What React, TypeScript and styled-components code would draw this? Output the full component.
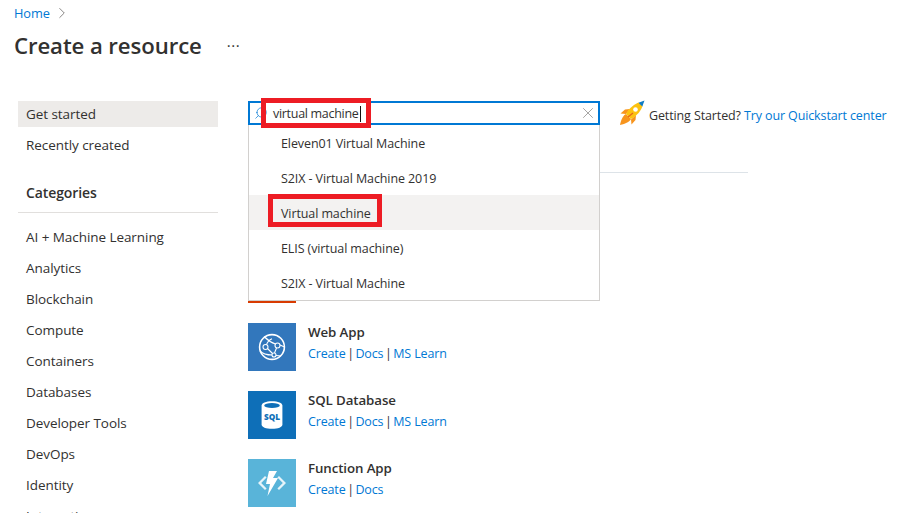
import styled, { createGlobalStyle } from "styled-components"
import { ChevronRight, Search, X } from "lucide-react"

const GlobalStyle = createGlobalStyle`
  html, body {
    margin: 0;
    height: 513px;
    overflow: hidden;
    background: #fff;
  }
  body {
    font-family: "Open Sans", "Noto Sans", Arial, sans-serif;
    font-size: 12.5px;
    letter-spacing: -0.1px;
    color: #323130;
  }
`

const Page = styled.div`
  height: 513px;
  overflow: hidden;
  box-sizing: border-box;
`

const Header = styled.header`
  padding: 4px 0 0 14px;
  height: 101px;
  box-sizing: border-box;
`

const Breadcrumb = styled.nav`
  display: flex;
  align-items: center;
  gap: 3px;
  height: 17px;
  font-size: 12.8px;
  color: #0078d4;
`

const TitleRow = styled.div`
  display: flex;
  align-items: center;
  gap: 25px;
  margin-top: 7px;
  height: 34px;
`

const Title = styled.h1`
  margin: 0;
  font-size: 22.2px;
  font-weight: 600;
  letter-spacing: -0.1px;
  color: #323130;
`

const MoreButton = styled.span`
  font-size: 15px;
  letter-spacing: 0.6px;
  line-height: 1;
`

const Body = styled.div`
  display: flex;
  padding-left: 18px;
`

const Sidebar = styled.aside`
  width: 200px;
  flex: none;
  margin-right: 30px;
`

const NavItem = styled.div<{ $active?: boolean }>`
  height: 26px;
  margin-bottom: 5px;
  padding-left: 8px;
  display: flex;
  align-items: center;
  font-size: 13.5px;
  letter-spacing: -0.06px;
  background: ${(p) => (p.$active ? "#edebe9" : "transparent")};
`

const CategoriesTitle = styled.div`
  margin: 19px 0 11px;
  height: 36px;
  box-sizing: border-box;
  padding: 0 0 4px 8px;
  font-weight: 600;
  font-size: 14px;
  display: flex;
  align-items: center;
  border-bottom: 1px solid #e1dfdd;
`

const Main = styled.main`
  flex: 1;
  min-width: 0;
`

const TopRow = styled.div`
  display: flex;
  align-items: center;
  height: 28px;
  margin-top: -2px;
`

const SearchWrap = styled.div`
  position: relative;
  width: 352px;
  flex: none;
  margin-right: 19px;
`

const SearchBox = styled.div`
  height: 24px;
  box-sizing: border-box;
  border: 2px solid #0078d4;
  display: flex;
  align-items: center;
  padding: 0 1px 0 4px;
  color: #8a8886;
`

const SearchText = styled.span`
  flex: 1;
  margin-left: 5px;
  letter-spacing: -0.3px;
  color: #323130;
`

const Caret = styled.span`
  display: inline-block;
  width: 1px;
  height: 16px;
  margin-left: 1px;
  background: #111;
  vertical-align: -4px;
`

const Dropdown = styled.div`
  position: absolute;
  z-index: 2;
  top: 24px;
  left: 0;
  right: 0;
  box-sizing: border-box;
  height: 176px;
  background: #fff;
  border: 1px solid #d2d0ce;
  border-top: none;
`

const Option = styled.div<{ $active?: boolean }>`
  height: 35px;
  box-sizing: border-box;
  display: flex;
  align-items: center;
  padding: 2px 0 0 32px;
  background: ${(p) => (p.$active ? "#f3f2f1" : "transparent")};
`

const Highlight = styled.div`
  position: absolute;
  z-index: 3;
  box-sizing: border-box;
  border: 5px solid #ed1c24;
  pointer-events: none;
`

const InputHighlight = styled(Highlight)`
  left: 13px;
  top: -3px;
  width: 110px;
  height: 30px;
`

const OptionHighlight = styled(Highlight)`
  left: 20px;
  top: 93px;
  width: 114px;
  height: 33px;
`

const Quickstart = styled.div`
  display: flex;
  align-items: center;
  gap: 4px;
  white-space: nowrap;
  letter-spacing: -0.12px;
`

const QuickstartText = styled.span`
  margin-top: 4px;
`

const Link = styled.a`
  color: #0078d4;
  text-decoration: none;
`

const Divider = styled.div`
  width: 500px;
  height: 1px;
  margin-top: 45px;
  background: #dde3e8;
`

const ResourceList = styled.div`
  margin-top: 82px;
  display: flex;
  flex-direction: column;
  gap: 20px;
`

const ResourceRow = styled.div`
  display: flex;
  gap: 12px;
  height: 48px;
`

const IconTile = styled.div<{ $bg: string }>`
  width: 48px;
  height: 48px;
  flex: none;
  background: ${(p) => p.$bg};
  display: flex;
  align-items: center;
  justify-content: center;
`

const ResourceName = styled.div`
  font-weight: 600;
  font-size: 13.3px;
  line-height: 18px;
`

const ResourceLinks = styled.div`
  margin-top: 4px;
  line-height: 18px;
  letter-spacing: -0.15px;
`

const Separator = styled.span`
  margin: 0 1.6px;
`

const WebAppIcon = () => (
  <svg width="30" height="30" viewBox="0 0 30 30" fill="none" stroke="#fff" strokeWidth="1.1">
    <circle cx="15" cy="15" r="12.4" strokeWidth="1.6" />
    <circle cx="8.500" cy="15" r="2.500" />
    <circle cx="20.500" cy="13.500" r="2.500" />
    <circle cx="17" cy="23" r="2" />
    <path d="M7 4.500c3 3 7 6 11.500 7.500M3 19c3 3 7 4 12 4M9.500 12.700c1-3 3-5 5.500-6M10.500 16.500l5 5M19.500 16l-2 5M23 13l4.500 2M19 23.500l5 .5" />
  </svg>
)

const SqlIcon = () => (
  <svg width="26" height="30" viewBox="0 0 30 34">
    <path d="M3 6c0-3 5-5 12-5s12 2 12 5v22c0 3-5 5-12 5S3 31 3 28z" fill="#fff" />
    <ellipse cx="15" cy="6" rx="9" ry="2.800" fill="#0e6fb8" />
    <text x="15" y="23" textAnchor="middle" fontFamily="Open Sans, sans-serif" fontWeight="800" fontSize="9.500" fill="#0e6fb8">
      SQL
    </text>
  </svg>
)

const FunctionIcon = () => (
  <svg width="30" height="26" viewBox="0 0 30 26">
    <path d="M8 6 1 13l7 7 1.600-1.600L4.200 13l5.400-5.400zM22 6l7 7-7 7-1.600-1.600 5.400-5.400-5.400-5.400z" fill="#fff" opacity=".85" />
    <path d="M12 1h8l-4 7h5L10.500 26l2.500-12H9z" fill="#fff" />
  </svg>
)

const RocketIcon = () => (
  <svg width="26" height="26" viewBox="0 0 26 26">
    <path d="M7 14 1.500 13.500 6 9.500l5-.5zM12 19.500l.5 5 4-4.500.5-5z" fill="#f7941d" />
    <path d="M7 14c-2.500 1-5 5.500-6 11 5.500-1 10-3.500 11-6z" fill="#f7941d" />
    <path d="M7 14C10 8 16 3.500 20 2.500L23.500 6C22.500 10 18 16 12 19z" fill="#fcc210" />
    <path d="M19.500 2.700 25.500.5 23.300 6.500z" fill="#0f7cc4" />
    <circle cx="16.500" cy="9.500" r="2.300" fill="#fff" />
    <path d="M9 17l5-4" stroke="#e8641b" strokeWidth="1.200" />
  </svg>
)

const categories = [
  "AI + Machine Learning",
  "Analytics",
  "Blockchain",
  "Compute",
  "Containers",
  "Databases",
  "Developer Tools",
  "DevOps",
  "Identity",
  "Integration",
]

const options = [
  "Eleven01 Virtual Machine",
  "S2IX - Virtual Machine 2019",
  "Virtual machine",
  "ELIS (virtual machine)",
  "S2IX - Virtual Machine",
]

const resources = [
  { name: "Web App", bg: "#3277bc", icon: <WebAppIcon />, learn: true },
  { name: "SQL Database", bg: "#0e6fb8", icon: <SqlIcon />, learn: true },
  { name: "Function App", bg: "#59b4d9", icon: <FunctionIcon />, learn: false },
]

export default function App() {
  return (
    <Page>
      <GlobalStyle />
      <Header>
        <Breadcrumb>
          Home <ChevronRight size={18} strokeWidth={1} color="#605e5c" />
        </Breadcrumb>
        <TitleRow>
          <Title>Create a resource</Title>
          <MoreButton>···</MoreButton>
        </TitleRow>
      </Header>
      <Body>
        <Sidebar>
          <NavItem $active>Get started</NavItem>
          <NavItem>Recently created</NavItem>
          <CategoriesTitle>Categories</CategoriesTitle>
          {categories.map((category) => (
            <NavItem key={category}>{category}</NavItem>
          ))}
        </Sidebar>
        <Main>
          <TopRow>
            <SearchWrap>
              <SearchBox>
                <Search size={14} strokeWidth={1.2} color="#0078d4" style={{ transform: "scaleX(-1)" }} />
                <SearchText>
                  virtual machine
                  <Caret />
                </SearchText>
                <X size={18} strokeWidth={1} />
              </SearchBox>
              <Dropdown>
                {options.map((option) => (
                  <Option key={option} $active={option === "Virtual machine"}>
                    {option}
                  </Option>
                ))}
              </Dropdown>
              <InputHighlight />
              <OptionHighlight />
            </SearchWrap>
            <Quickstart>
              <RocketIcon />
              <QuickstartText>
                Getting Started? <Link>Try our Quickstart center</Link>
              </QuickstartText>
            </Quickstart>
          </TopRow>
          <Divider />
          <ResourceList>
            <ResourceRow>
              <IconTile $bg="#d83b01" />
            </ResourceRow>
            {resources.map((resource) => (
              <ResourceRow key={resource.name}>
                <IconTile $bg={resource.bg}>{resource.icon}</IconTile>
                <div>
                  <ResourceName>{resource.name}</ResourceName>
                  <ResourceLinks>
                    <Link>Create</Link>
                    <Separator>|</Separator>
                    <Link>Docs</Link>
                    {resource.learn && (
                      <>
                        <Separator>|</Separator>
                        <Link>MS Learn</Link>
                      </>
                    )}
                  </ResourceLinks>
                </div>
              </ResourceRow>
            ))}
          </ResourceList>
        </Main>
      </Body>
    </Page>
  )
}
